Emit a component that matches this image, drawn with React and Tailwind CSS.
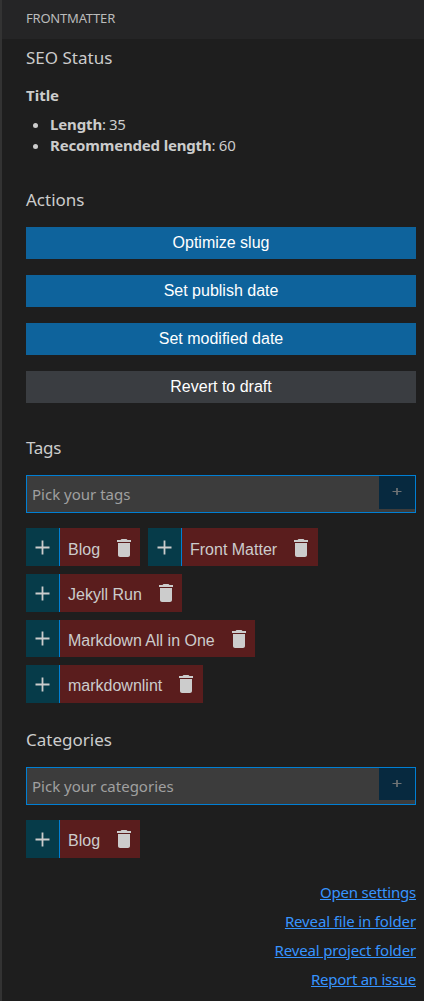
const heading = "font-['Noto_Sans',sans-serif] text-[17px] leading-6 text-[#cccccc]";

const actions = [
  { label: 'Optimize slug', color: 'bg-[#0e639c]' },
  { label: 'Set publish date', color: 'bg-[#0e639c]' },
  { label: 'Set modified date', color: 'bg-[#0e639c]' },
  { label: 'Revert to draft', color: 'bg-[#3a3d41]' },
];

const tags = [
  { label: 'Blog', size: 'w-[114px] h-[38px]', text: 'pt-[13px]', plus: 'pt-[7px]', trash: 'mt-2' },
  { label: 'Front Matter', size: 'w-[170px] h-[38px]', text: 'pt-[13px]', plus: 'pt-[7px]', trash: 'mt-2' },
  { label: 'Jekyll Run', size: 'w-[156px] h-[38px]', text: 'pt-3', plus: 'pt-[7px]', trash: 'mt-[7px]' },
  { label: 'Markdown All in One', size: 'w-[229px] h-[37px]', text: 'pt-3', plus: 'pt-[6px]', trash: 'mt-[7px]' },
  { label: 'markdownlint', size: 'w-[177px] h-[38px]', text: 'pt-3', plus: 'pt-[7px]', trash: 'mt-[7px]' },
];

const categories = [
  { label: 'Blog', size: 'w-[114px] h-[38px]', text: 'pt-3', plus: 'pt-[7px]', trash: 'mt-[7px]' },
];

const links = [
  { label: 'Open settings', tracking: 'tracking-[-0.2px]' },
  { label: 'Reveal file in folder', tracking: 'tracking-[-0.14px]' },
  { label: 'Reveal project folder', tracking: 'tracking-[-0.16px]' },
  { label: 'Report an issue', tracking: 'tracking-[-0.28px]' },
];

function PlusIcon() {
  return (
    <svg viewBox="-0.5 -0.5 25 25" className="size-[25px] shrink-0" fill="currentColor">
      <path d="M19 12.9h-6.1V19h-1.8v-6.1H5v-1.8h6.1V5h1.8v6.1H19z" />
    </svg>
  );
}

function TrashIcon({ className }) {
  return (
    <svg viewBox="0 0 24 24" className={`size-6 shrink-0 ${className}`} fill="currentColor">
      <path d="M6 19c0 1.1.9 2 2 2h8c1.1 0 2-.9 2-2V7H6v12zM19 4h-3.5l-1-1h-5l-1 1H5v2h14V4z" />
    </svg>
  );
}

function Picker({ placeholder, buttonHeight }) {
  return (
    <div className="mt-[15px] flex h-[38px] items-start border border-[#007fd4] bg-[#3c3c3c]">
      <span className="min-w-0 flex-1 pt-[7px] pl-[5px] font-['Noto_Sans',sans-serif] text-[15px] leading-[22px] text-[#a0a0a0]">
        {placeholder}
      </span>
      <button className={`flex w-9 items-center justify-center bg-[#07293f] text-[#6f7375] ${buttonHeight}`}>
        <svg viewBox="0 0 10 10" className="mb-px size-2.5" fill="none" stroke="currentColor">
          <path d="M5 1v7" strokeWidth="1.7" />
          <path d="M0.5 4.5h9" strokeWidth="1" />
        </svg>
      </button>
    </div>
  );
}

function Chips({ items }) {
  return (
    <div className="mt-[15px] flex flex-wrap gap-2">
      {items.map(({ label, size, text, plus, trash }) => (
        <div key={label} className={`flex text-[#cccccc] ${size}`}>
          <button
            className={`flex w-[34px] shrink-0 items-start justify-center border-r border-[#007fd4] bg-[#063b49] ${plus}`}
          >
            <PlusIcon />
          </button>
          <button className="flex flex-1 items-start gap-3 bg-[#5a1d1d] pl-2">
            <span
              className={`font-['Liberation_Sans',Arial,sans-serif] text-base leading-[18px] whitespace-nowrap ${text}`}
            >
              {label}
            </span>
            <TrashIcon className={trash} />
          </button>
        </div>
      ))}
    </div>
  );
}

export default function App() {
  return (
    <div className="flex h-[1001px] w-full flex-col overflow-hidden border-l-2 border-[#333333] bg-[#1e1e1e] font-['Noto_Sans',sans-serif] text-[15px] text-[#cccccc]">
      <header className="flex h-[39px] shrink-0 items-center bg-[#252526] pr-2 pb-[2px] pl-6 text-[13px] tracking-[-0.21px] text-[#bbbbbb]">
        FRONTMATTER
      </header>
      <main className="flex flex-col pt-[7px] pr-2 pl-6">
        <h3 className={heading}>SEO Status</h3>
        <h4 className="mt-[14px] leading-[22px] font-bold">Title</h4>
        <ul className="mt-2 list-disc pl-6 leading-[21px]">
          <li>
            <strong className="tracking-[-0.14px]">Length</strong>
            <span className="tracking-[-0.4px]">: 35</span>
          </li>
          <li>
            <strong className="tracking-[-0.17px]">Recommended length</strong>
            <span className="tracking-[-0.3px]">: 60</span>
          </li>
        </ul>

        <h3 className={`mt-8 ${heading}`}>Actions</h3>
        <div className="mt-[15px] flex flex-col gap-4">
          {actions.map(({ label, color }) => (
            <button
              key={label}
              className={`h-8 pb-px font-['Liberation_Sans',Arial,sans-serif] text-base leading-[18px] text-white ${color}`}
            >
              {label}
            </button>
          ))}
        </div>

        <h3 className={`mt-[33px] tracking-[-0.3px] ${heading}`}>Tags</h3>
        <Picker placeholder="Pick your tags" buttonHeight="h-[33px]" />
        <Chips items={tags} />

        <h3 className={`mt-[25px] ${heading}`}>Categories</h3>
        <Picker placeholder="Pick your categories" buttonHeight="h-8" />
        <Chips items={categories} />

        <nav className="mt-[23px] flex flex-col items-end gap-[7px]">
          {links.map(({ label, tracking }) => (
            <a key={label} href="#" className={`leading-[22px] text-[#3794ff] underline ${tracking}`}>
              {label}
            </a>
          ))}
        </nav>
      </main>
    </div>
  );
}
